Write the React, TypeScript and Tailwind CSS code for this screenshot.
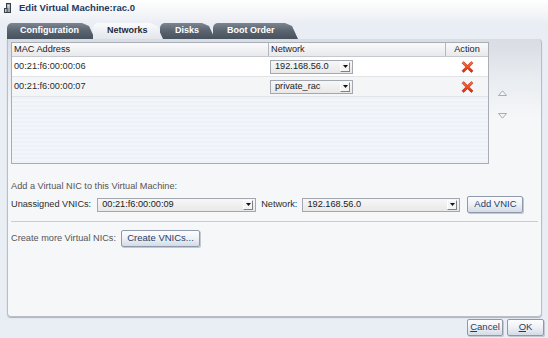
import React from "react";

const font = "font-['Liberation_Sans',Arial,sans-serif]";

function DropArrow() {
  return (
    <span className="flex h-[10px] w-[10px] shrink-0 items-center justify-center border border-t-white border-l-white border-r-[#7d828a] border-b-[#7d828a] bg-[#f4f4f4]">
      <svg width="5" height="3" viewBox="0 0 5 3">
        <path d="M0 0h5L2.5 3z" fill="#111" />
      </svg>
    </span>
  );
}

function Select({ value, className }: { value: string; className: string }) {
  return (
    <div
      className={`flex items-center border border-[#a3a8b0] bg-gradient-to-b from-[#f7f7f7] to-[#e8e8e8] pl-[4px] pr-[2px] text-[#1b1b1b] ${className}`}
    >
      <span className="flex-1 truncate leading-none">{value}</span>
      <DropArrow />
    </div>
  );
}

function Btn({ children, className }: { children: React.ReactNode; className: string }) {
  return (
    <div
      className={`flex items-center justify-center rounded-[2px] border border-[#8e9aab] bg-gradient-to-b from-[#fdfdfe] via-[#eef1f6] to-[#d3dbe6] text-[9.5px] text-[#1f3d66] shadow-[1px_1px_0_#c3c9d2] ${className}`}
    >
      {children}
    </div>
  );
}

function RemoveIcon() {
  return (
    <svg width="13" height="12" viewBox="0 0 13 12">
      <defs>
        <linearGradient id="xg" x1="0" y1="0" x2="0" y2="1">
          <stop offset="0" stopColor="#ff7a3c" />
          <stop offset="1" stopColor="#d8260e" />
        </linearGradient>
      </defs>
      <path
        d="M1 2.2L2.6 0.6 6.5 4.3 10.4 0.6 12 2.2 8.2 6 12 9.8 10.4 11.4 6.5 7.7 2.6 11.4 1 9.8 4.8 6z"
        fill="url(#xg)"
        stroke="#b3200c"
        strokeWidth="0.6"
      />
    </svg>
  );
}

function Tab({
  label,
  active,
  className,
}: {
  label: string;
  active?: boolean;
  className: string;
}) {
  return (
    <div
      className={`flex h-[16px] items-center rounded-tl-[5px] text-[9px] font-bold [clip-path:polygon(0_0,calc(100%-13px)_0,calc(100%-6px)_3px,100%_100%,0_100%)] ${
        active
          ? "z-10 bg-gradient-to-b from-[#fbfbfc] to-[#e3e6eb] text-[#1e2b3a]"
          : "bg-gradient-to-b from-[#7c8590] via-[#5a6470] to-[#48525e] text-white"
      } ${className}`}
    >
      {label}
    </div>
  );
}

function Header({ children, className }: { children: React.ReactNode; className: string }) {
  return (
    <div className={`flex h-[13px] items-center border-r border-[#b3b8bf] ${className}`}>
      {children}
    </div>
  );
}

export default function App() {
  return (
    <div className={`flex h-[338px] w-[548px] flex-col bg-[#e9edf4] text-[9.2px] text-[#2b2b2b] ${font}`}>
      {/* Title */}
      <div className="flex h-[16px] items-center gap-[8px] bg-gradient-to-b from-white to-[#f1f3f7] pl-[4px]">
        <svg width="7" height="10" viewBox="0 0 7 10">
          <rect x="2.5" y="0.5" width="4" height="9" fill="#9aa1aa" stroke="#3a4048" />
          <rect x="0.5" y="5.5" width="2.5" height="4" fill="#c9ced5" stroke="#3a4048" />
          <path d="M3.5 2.5h2M3.5 4h2" stroke="#eef0f3" />
        </svg>
        <span className="text-[9.5px] font-bold text-[#1d3a5f]">Edit Virtual Machine:rac.0</span>
      </div>
      <div className="h-[7px] bg-gradient-to-b from-[#f1f3f7] to-[#ebeef4]" />

      {/* Tabs */}
      <div className="flex h-[16px] items-end pl-[7px]">
        <Tab label="Configuration" className="z-[4] w-[88px] pl-[13px]" />
        <Tab label="Networks" active className="-ml-[2px] w-[70px] pl-[14px]" />
        <Tab label="Disks" className="z-[2] -ml-[3px] w-[55px] pl-[15px]" />
        <Tab label="Boot Order" className="z-[1] -ml-[2px] w-[85px] pl-[14px]" />
      </div>

      {/* Panel */}
      <div className="ml-[7px] flex h-[278px] w-[535px] flex-col rounded-b-[4px] rounded-tr-[4px] border border-[#b9bec6] border-t-0 bg-[linear-gradient(to_bottom,#d8dce3,#e9ecf0_40px,#f6f7f9_80px)] px-[3px] pt-[3px] shadow-[0_1px_1px_#aeb4bc]">
        <div className="flex">
          {/* Table */}
          <div className="flex h-[122px] w-[478px] flex-col border border-[#a9aeb6] bg-[#eef2f7]">
            <div className="flex border-b border-[#c5c9cf] bg-gradient-to-b from-[#fafafb] to-[#e8e9ec] text-[#222]">
              <Header className="w-[257px] pl-[2px]">MAC Address</Header>
              <Header className="w-[177px] pl-[2px]">Network</Header>
              <div className="flex h-[13px] flex-1 items-center justify-center">Action</div>
            </div>
            <div className="flex h-[20px] items-center border-b border-[#e2e4e8] bg-white">
              <div className="w-[257px] pl-[2px]">00:21:f6:00:00:06</div>
              <div className="w-[177px] pl-[1px]">
                <Select value="192.168.56.0" className="h-[14px] w-[83px]" />
              </div>
              <div className="flex flex-1 justify-center">
                <RemoveIcon />
              </div>
            </div>
            <div className="flex h-[20px] items-center border-b border-[#e2e4e8] bg-[#f4f5f7]">
              <div className="w-[257px] pl-[2px]">00:21:f6:00:00:07</div>
              <div className="w-[177px] pl-[1px]">
                <Select value="private_rac" className="h-[14px] w-[83px]" />
              </div>
              <div className="flex flex-1 justify-center">
                <RemoveIcon />
              </div>
            </div>
            <div className="flex-1 bg-[repeating-linear-gradient(to_bottom,#eef2f8_0px,#eef2f8_2px,#f2f5f9_2px,#f2f5f9_4px)]" />
          </div>

          {/* Reorder */}
          <div className="flex flex-col items-center gap-[17px] pl-[9px] pt-[48px]">
            <svg width="9" height="6" viewBox="0 0 9 6">
              <path d="M0.5 5.5L4.5 0.8 8.5 5.5z" fill="#f3f4f6" stroke="#a9adb3" />
            </svg>
            <svg width="9" height="6" viewBox="0 0 9 6">
              <path d="M0.5 0.5L4.5 5.2 8.5 0.5z" fill="#f3f4f6" stroke="#a9adb3" />
            </svg>
          </div>
        </div>

        <div className="mt-[15px] leading-[14px] text-[#555]">Add a Virtual NIC to this Virtual Machine:</div>

        <div className="mt-[3px] flex h-[17px] items-center">
          <span className="text-[#2b2b2b]">Unassigned VNICs:</span>
          <Select value="00:21:f6:00:00:09" className="ml-[6px] h-[14px] w-[159px]" />
          <span className="ml-[5px]">Network:</span>
          <Select value="192.168.56.0" className="ml-[5px] h-[14px] w-[158px]" />
          <Btn className="ml-[7px] h-[17px] w-[56px]">Add VNIC</Btn>
        </div>

        <div className="mt-[8px] h-px bg-[#c9cdd3]" />

        <div className="mt-[8px] flex h-[17px] items-center">
          <span className="text-[#555]">Create more Virtual NICs:</span>
          <Btn className="ml-[5px] h-[17px] w-[79px]">Create VNICs...</Btn>
        </div>
      </div>

      {/* Footer */}
      <div className="mt-[2px] flex justify-end gap-[4px] pr-[4px]">
        <Btn className="h-[17px] w-[36px]">
          <span>
            <span className="underline">C</span>ancel
          </span>
        </Btn>
        <Btn className="h-[17px] w-[37px]">
          <span>
            <span className="underline">O</span>K
          </span>
        </Btn>
      </div>
    </div>
  );
}
